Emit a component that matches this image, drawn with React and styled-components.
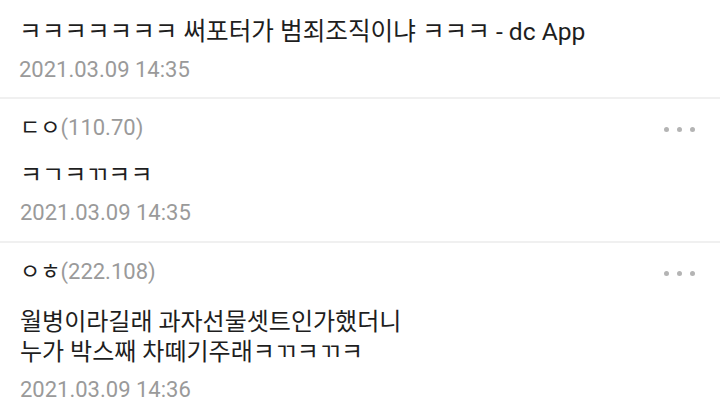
import React from "react";
import styled, { createGlobalStyle } from "styled-components";

const GlobalStyle = createGlobalStyle`
  html, body {
    margin: 0;
    padding: 0;
    background: #fff;
  }
  body {
    font-family: Roboto, "Noto Sans CJK KR", sans-serif;
    -webkit-font-smoothing: antialiased;
  }
`;

const Page = styled.div`
  width: 720px;
  height: 411px;
  overflow: hidden;
  background: #fff;
`;

const Header = styled.div`
  padding: 17px 20px 12px 19px;
  border-bottom: 2px solid #f0f0f0;
`;

const Title = styled.h1`
  margin: 0;
  font-size: 24.6px;
  font-weight: 400;
  line-height: 30px;
  color: #1e1e1e;
`;

const DateText = styled.div`
  margin-top: ${(p) => p.$gap || 8}px;
  font-size: 22px;
  line-height: 30px;
  color: #9a9a9a;
`;

const Comment = styled.div`
  padding: 14px 20px 13px;
  border-bottom: 2px solid #f0f0f0;
`;

const Meta = styled.div`
  display: flex;
  align-items: center;
  justify-content: space-between;
  height: 30px;
`;

const Name = styled.div`
  font-size: 22px;
  line-height: 30px;
  color: #1e1e1e;
  span {
    color: #9a9a9a;
  }
`;

const More = styled.div`
  display: flex;
  gap: 8px;
  margin-right: 5px;
  margin-top: 3px;
  i {
    width: 5px;
    height: 5px;
    border-radius: 50%;
    background: #b4b4b4;
  }
`;

const Body = styled.div`
  margin-top: ${(p) => p.$gap}px;
  font-size: 24px;
  line-height: 30px;
  color: #1e1e1e;
  white-space: pre-line;
`;

const comments = [
  {
    nick: "ㄷㅇ",
    ip: "(110.70)",
    text: "ㅋㄱㅋㄲㅋㅋ",
    date: "2021.03.09 14:35",
    gap: 17,
  },
  {
    nick: "ㅇㅎ",
    ip: "(222.108)",
    text: "월병이라길래 과자선물셋트인가했더니\n누가 박스째 차떼기주래ㅋㄲㅋㄲㅋ",
    date: "2021.03.09 14:36",
    gap: 20,
  },
];

export default function App() {
  return (
    <Page>
      <GlobalStyle />
      <Header>
        <Title>ㅋㅋㅋㅋㅋㅋㅋ 써포터가 범죄조직이냐 ㅋㅋㅋ - dc App</Title>
        <DateText>2021.03.09 14:35</DateText>
      </Header>
      {comments.map((c) => (
        <Comment key={c.ip}>
          <Meta>
            <Name>
              {c.nick}
              <span>{c.ip}</span>
            </Name>
            <More>
              <i />
              <i />
              <i />
            </More>
          </Meta>
          <Body $gap={c.gap}>{c.text}</Body>
          <DateText>{c.date}</DateText>
        </Comment>
      ))}
    </Page>
  );
}
